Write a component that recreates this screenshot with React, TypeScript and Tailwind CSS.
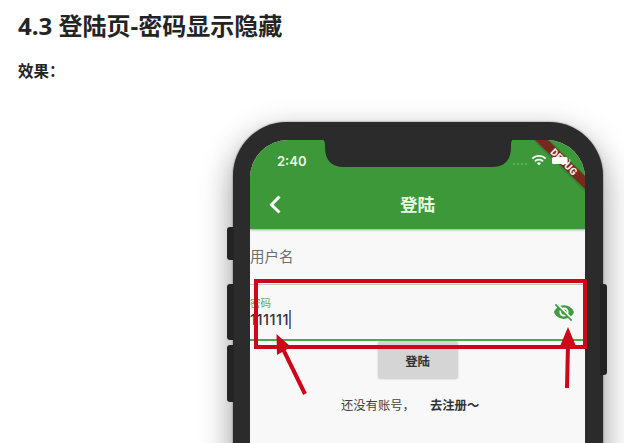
import { MdVisibilityOff, MdWifi } from "react-icons/md";

function SideButton({ className }: { className: string }) {
  return <span className={`absolute w-[7px] bg-[#232323] ${className}`} />;
}

function StatusBar() {
  return (
    <div className="relative flex h-[40px] items-center justify-between pl-[27px] pr-[21px]">
      <span className="pt-[2px] font-['Inter'] text-[13px] font-semibold leading-none text-[#eaf8e6]">2:40</span>
      <svg className="absolute left-[71px] top-[-1px]" width="193" height="28" viewBox="0 0 193 28">
        <path d="M0 0Q4 1 4 5V8Q4 28 23 28H171Q190 28 190 8V5Q190 1 193 0Z" fill="#2b2b2b" />
      </svg>
      <span className="absolute left-[263px] top-[23px] flex gap-[2px]">
        <i className="size-[2px] rounded-full bg-[#6ab466]" />
        <i className="size-[2px] rounded-full bg-[#6ab466]" />
        <i className="size-[2px] rounded-full bg-[#6ab466]" />
        <i className="size-[2px] rounded-full bg-[#6ab466]" />
      </span>
      <MdWifi className="absolute left-[281px] top-[12px] size-[16px] text-white" />
      <svg className="absolute right-0 top-0" width="52" height="52" viewBox="0 0 52 52">
        <path d="M-1 -1H16L53 36V53Z" fill="#194c18" opacity=".2" />
        <path d="M2 0H15L52 36V49Z" fill="#792820" />
        <text x="31" y="25.500" transform="rotate(45 31 22)" textAnchor="middle" fontFamily="Roboto, sans-serif" fontSize="10" fontWeight="900" letterSpacing=".3" fill="#f8e8e2">DEBUG</text>
        <rect x="19" y="17" width="15.5" height="7" rx="1.5" fill="#fff" />
        <rect x="36" y="19" width="1.5" height="3" rx=".7" fill="#b5c9ae" />
      </svg>
    </div>
  );
}

function LoginScreen() {
  return (
    <div className="h-[400px] overflow-hidden rounded-t-[38px] bg-[#f8f8f8]">
      <header className="h-[89px] bg-[#3c9838] shadow-[0_1px_2px_rgba(0,0,0,0.35)]">
        <StatusBar />
        <div className="relative flex h-[48px] items-center justify-center">
          <svg className="absolute left-[18px] top-[15px]" width="14" height="20" viewBox="0 0 14 20">
            <path d="M11.500 1.500L3.500 9.800L11.500 17.500" fill="none" stroke="#fff" strokeWidth="3" />
          </svg>
          <h2 className="text-[17.500px] font-bold leading-none text-[#e9fbe6]">登陆</h2>
        </div>
      </header>
      <div className="flex h-[56px] items-center border-b border-[#c4c4c4] text-[14.500px] leading-none text-[#6d6d6d]">
        用户名
      </div>
      <div className="flex h-[56px] items-center justify-between border-b-2 border-[#4baa4c] pr-[10px]">
        <div className="pt-[1px]">
          <div className="text-[10.500px] leading-[14px] text-[#57ae58]">密码</div>
          <div className="flex h-[19px] items-center">
            <span className="w-[39px] whitespace-nowrap pt-[2px] font-['Inter'] text-[14.500px] font-medium leading-none tracking-[0.500px] text-[#333]">111111</span>
            <i className="h-[19px] w-[2px] bg-[#477fc7]" />
          </div>
        </div>
        <MdVisibilityOff className="size-[22px] text-[#3f9c42]" />
      </div>
      <button className="mx-auto block h-[37px] w-[80px] rounded-[2px] bg-[#d5d5d5] pt-[4px] text-[12.300px] font-bold leading-none text-[#333] shadow-[0_1px_2px_rgba(0,0,0,0.2)]">
        登陆
      </button>
      <div className="mt-[18px] flex gap-[15px] pl-[91px] text-[12.300px] leading-[18px] text-[#414141]">
        <span className="w-[74px]">还没有账号，</span>
        <strong className="font-bold text-[#333]">去注册～</strong>
      </div>
    </div>
  );
}

function Annotations() {
  return (
    <svg className="absolute left-0 top-0" width="624" height="443" viewBox="0 0 624 443" fill="none">
      <rect x="256" y="281" width="329" height="66" stroke="#cd0719" strokeWidth="4" />
      <path d="M283 349L305 394" stroke="#cd0719" strokeWidth="4" />
      <path d="M276.500 334L277 355L291 347Z" fill="#cd0719" />
      <path d="M568 344L567 388" stroke="#cd0719" strokeWidth="4" />
      <path d="M568 327L560.500 345H575.500Z" fill="#cd0719" />
    </svg>
  );
}

export default function App() {
  return (
    <main className="relative h-[443px] w-[624px] overflow-hidden bg-white font-['Noto_Sans_CJK_SC',sans-serif] text-[#242424]">
      <h1 className="pl-[18px] pt-[9px] font-['Open_Sans','Noto_Sans_CJK_SC',sans-serif] text-[24px] font-bold leading-[34px]">
        4.3 登陆页-密码显示隐藏
      </h1>
      <p className="pl-[18px] pt-[15px] text-[15.500px] font-bold leading-[24px]">效果：</p>
      <section className="relative ml-[233px] mt-[40px] h-[440px] w-[370px] rounded-t-[54px] bg-[#2b2b2b] pl-[17px] pr-[18px] pt-[18px] shadow-[0_12px_32px_rgba(0,0,0,0.42),0_0_2px_#777]">
        <SideButton className="left-[-6px] top-[105px] h-[33px] rounded-l-[3px]" />
        <SideButton className="left-[-6px] top-[162px] h-[56px] rounded-l-[3px]" />
        <SideButton className="left-[-6px] top-[223px] h-[57px] rounded-l-[3px]" />
        <SideButton className="right-[-4px] top-[162px] h-[91px] rounded-r-[3px]" />
        <LoginScreen />
      </section>
      <Annotations />
    </main>
  );
}
